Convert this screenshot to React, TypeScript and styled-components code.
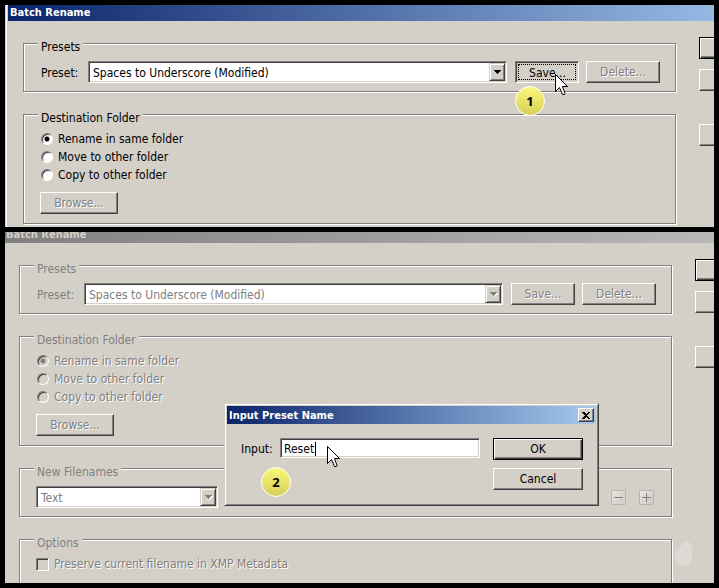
import React from "react";
import styled, { createGlobalStyle, css } from "styled-components";

const FACE = "#d4d0c8";
const SHADE = "#808080";
const DARK = "#404040";

const GlobalStyle = createGlobalStyle`
  * { box-sizing: border-box; }
  body { margin: 0; background: #000; }
  body, button, input, select {
    font-family: "DejaVu Sans Condensed", "DejaVu Sans", sans-serif;
    font-size: 12px;
    color: #000;
  }
`;

const Page = styled.main`
  display: grid;
  grid-template-rows: auto minmax(0, 1fr);
  gap: 5px;
  height: 100vh;
  padding: 5px;
  background: #000;
`;

const Shot = styled.section`
  position: relative;
  display: flex;
  overflow: hidden;
  background: ${FACE};
`;

const Window = styled.div<{ $shifted?: boolean }>`
  flex: 1;
  min-width: 0;
  display: flex;
  flex-direction: column;
  border-left: 1px solid ${FACE};
  box-shadow: inset 1px 0 #fff;
  padding-left: 2px;
  ${(p) => p.$shifted && css`margin: -5px 0 0 -4px;`}
`;

const TitleBar = styled.header<{ $inactive?: boolean }>`
  flex: none;
  height: 16px;
  padding-left: 2px;
  line-height: 15px;
  font-size: 11px;
  font-weight: bold;
  white-space: nowrap;
  color: ${(p) => (p.$inactive ? FACE : "#fff")};
  background: ${(p) =>
    p.$inactive
      ? "linear-gradient(90deg, #808080, #b8b8b8)"
      : "linear-gradient(90deg, #0a246a, #95b8e3)"};
`;

const Body = styled.div<{ $side: number }>`
  flex: 1;
  display: grid;
  grid-template-columns: minmax(0, 1fr) ${(p) => p.$side}px;
  gap: 23px;
  padding: 11px 0 3px 15px;
`;

const Groups = styled.div`
  display: flex;
  flex-direction: column;
  gap: 11px;
`;

const Group = styled.fieldset<{ $cut?: boolean }>`
  min-width: 0;
  margin: 0;
  padding: 6px 15px 8px 17px;
  border: 1px solid ${SHADE};
  box-shadow: 1px 1px #fff, inset 1px 1px #fff;
  color: #000;
  &:disabled { color: ${SHADE}; }
  ${(p) => p.$cut && css`flex: 1; margin-bottom: -20px; padding-top: 4px;`}
`;

const Legend = styled.legend`
  margin-left: -3px;
  padding: 8px 3px 0;
  line-height: 15px;
  background: ${FACE};
`;

const Row = styled.div`
  display: flex;
  align-items: center;
`;

const FieldLabel = styled.label`
  width: 47px;
  line-height: 24px;
  height: 22px;
`;

const SelectBox = styled.div<{ $narrow?: boolean }>`
  position: relative;
  height: 22px;
  ${(p) => (p.$narrow ? css`width: 182px; margin-left: -1px;` : css`flex: 1;`)}
`;

const Select = styled.select`
  appearance: none;
  display: block;
  width: 100%;
  height: 22px;
  padding: 1px 20px 0 4px;
  border: 1px solid;
  border-color: ${SHADE} #fff #fff ${SHADE};
  border-radius: 0;
  background: #fff;
  box-shadow: inset 1px 1px ${DARK}, inset -1px -1px ${FACE};
  opacity: 1;
  &:disabled { color: ${SHADE}; opacity: 1; }
`;

const ArrowBox = styled.span`
  position: absolute;
  top: 2px;
  right: 2px;
  display: grid;
  place-items: center;
  width: 16px;
  height: 18px;
  border: 1px solid;
  border-color: ${FACE} ${DARK} ${DARK} ${FACE};
  box-shadow: inset 1px 1px #fff, inset -1px -1px ${SHADE};
  background: ${FACE};
  pointer-events: none;
`;

const Button = styled.button<{ $width: number; $look?: "default" | "pressed" }>`
  flex: none;
  width: ${(p) => p.$width}px;
  height: 22px;
  padding: 0;
  border: 1px solid;
  border-color: #fff ${DARK} ${DARK} #fff;
  border-radius: 0;
  background: ${FACE};
  box-shadow: inset -1px -1px ${SHADE};
  &:disabled { color: ${SHADE}; text-shadow: 1px 1px #fff; }
  ${(p) =>
    p.$look === "default" &&
    css`
      border-color: #000;
      box-shadow: inset 1px 1px #fff, inset -1px -1px ${DARK}, inset -2px -2px ${SHADE};
    `}
  ${(p) =>
    p.$look === "pressed" &&
    css`
      padding: 1px 0 0 1px;
      border-color: ${SHADE} #fff #fff ${SHADE};
      box-shadow: inset 1px 1px ${DARK};
      outline: 1px dotted #000;
      outline-offset: -4px;
    `}
`;

const Actions = styled.div`
  display: flex;
  gap: 7px;
  margin-left: 8px;
`;

const SaveSlot = styled.div`
  position: relative;
`;

const Choices = styled.div`
  display: flex;
  flex-direction: column;
  margin: -2px 0 8px;
`;

const Choice = styled.label<{ $disabled?: boolean }>`
  display: flex;
  align-items: center;
  gap: 5px;
  height: 18px;
  line-height: 18px;
  text-shadow: ${(p) => (p.$disabled ? "1px 1px #fff" : "none")};
`;

const Radio = styled.input`
  appearance: none;
  width: 12px;
  height: 12px;
  margin: 0;
  border: 1px solid;
  border-color: ${SHADE} #fff #fff ${SHADE};
  border-radius: 50%;
  background: #fff;
  box-shadow: inset 1px 1px ${DARK};
  &:disabled { background: ${FACE}; }
  &:checked { background: radial-gradient(circle, #000 2px, #fff 3px); }
  &:checked:disabled { background: radial-gradient(circle, ${SHADE} 2px, ${FACE} 3px); }
`;

const CheckBox = styled.input`
  appearance: none;
  width: 13px;
  height: 13px;
  margin: 0 0 0 -1px;
  border: 1px solid;
  border-color: ${SHADE} #fff #fff ${SHADE};
  background: ${FACE};
  box-shadow: inset 1px 1px ${DARK};
`;

const Inset = styled.div`
  margin-left: -1px;
  padding-bottom: 1px;
`;

const Side = styled.div`
  display: flex;
  flex-direction: column;
  gap: 10px;
  padding-top: 5px;
`;

const SideGap = styled.div`
  height: 13px;
`;

const Stepper = styled.div`
  display: flex;
  gap: 13px;
  margin-left: auto;
  padding-right: 2px;
`;

const StepButton = styled.button`
  display: grid;
  place-items: center;
  width: 15px;
  height: 15px;
  padding: 0;
  border: 1px solid #b8b5af;
  border-radius: 1px;
  background: linear-gradient(135deg, #e8e6e2, #cdc9c1);
`;

const Badge = styled.span<{ $x: number; $y: number }>`
  position: absolute;
  z-index: 2;
  left: ${(p) => p.$x}px;
  top: ${(p) => p.$y}px;
  width: 30px;
  height: 30px;
  border: 1px solid #fff;
  border-radius: 50%;
  background: linear-gradient(#fbf77c, #d8d056);
  font: bold 13px/28px "Open Sans", sans-serif;
  text-align: center;
`;

const Cursor = styled.svg<{ $x: number; $y: number }>`
  position: absolute;
  z-index: 3;
  left: ${(p) => p.$x}px;
  top: ${(p) => p.$y}px;
`;

const Dialog = styled.form`
  position: absolute;
  left: 219px;
  top: 171px;
  width: 375px;
  height: 103px;
  padding: 2px;
  border: 1px solid;
  border-color: ${FACE} ${DARK} ${DARK} ${FACE};
  background: ${FACE};
  box-shadow: inset 1px 1px #fff, inset -1px -1px ${SHADE};
`;

const DialogTitle = styled.header`
  display: flex;
  align-items: center;
  justify-content: space-between;
  height: 18px;
  padding: 0 2px;
  font-size: 11px;
  font-weight: bold;
  color: #fff;
  background: linear-gradient(90deg, #0a246a, #a6caf0);
`;

const CloseButton = styled.button`
  display: grid;
  place-items: center;
  width: 16px;
  height: 14px;
  padding: 0;
  border: 1px solid;
  border-color: #fff ${DARK} ${DARK} #fff;
  background: ${FACE};
  box-shadow: inset -1px -1px ${SHADE};
`;

const DialogBody = styled.div`
  display: flex;
  align-items: flex-start;
  padding: 14px 13px 0 14px;
`;

const InputLabel = styled.label`
  width: 39px;
  line-height: 22px;
`;

const TextInput = styled.input`
  flex: 1;
  min-width: 0;
  height: 20px;
  padding: 1px 3px 0;
  border: 1px solid;
  border-color: ${SHADE} #fff #fff ${SHADE};
  background: #fff;
  box-shadow: inset 1px 1px ${DARK}, inset -1px -1px ${FACE};
`;

const Caret = styled.span`
  position: absolute;
  left: 90px;
  top: 38px;
  width: 1px;
  height: 14px;
  background: #000;
`;

const DialogButtons = styled.div`
  display: flex;
  flex-direction: column;
  gap: 8px;
  margin-left: 13px;
`;

const Smudge = styled.svg`
  position: absolute;
  right: 18px;
  bottom: 16px;
`;

function Pointer({ x, y }: { x: number; y: number }) {
  return (
    <Cursor $x={x} $y={y} width="13" height="22" viewBox="0 0 13 22" aria-hidden="true">
      <path
        d="M.5 .5V17.5L4.5 13.5L7.5 20.5H9.5L10 19.5L7.5 12.5H12.5Z"
        fill="#fff"
        stroke="#000"
        strokeLinejoin="miter"
      />
    </Cursor>
  );
}

function DropDown({ id, label, value, disabled, narrow }: {
  id: string; label?: string; value: string; disabled?: boolean; narrow?: boolean;
}) {
  return (
    <SelectBox $narrow={narrow}>
      <Select id={id} aria-label={label} disabled={disabled}>
        <option>{value}</option>
      </Select>
      <ArrowBox>
        <svg width="9" height="6" viewBox="0 0 9 6" shapeRendering="crispEdges">
          {disabled && <path d="M2 2H9L5.500 6Z" fill="#fff" />}
          <path d="M1 1H8L4.500 5Z" fill={disabled ? SHADE : "#000"} />
        </svg>
      </ArrowBox>
    </SelectBox>
  );
}

function PresetGroup({ id, disabled }: { id: string; disabled?: boolean }) {
  return (
    <Group disabled={disabled}>
      <Legend>Presets</Legend>
      <Row>
        <FieldLabel htmlFor={id}>Preset:</FieldLabel>
        <DropDown id={id} value="Spaces to Underscore (Modified)" disabled={disabled} />
        <Actions>
          <SaveSlot>
            <Button type="button" $width={64} $look={disabled ? undefined : "pressed"} disabled={disabled}>
              Save...
            </Button>
            {!disabled && <Badge $x={0} $y={25}>1</Badge>}
            {!disabled && <Pointer x={40} y={13} />}
          </SaveSlot>
          <Button type="button" $width={74} disabled>Delete...</Button>
        </Actions>
      </Row>
    </Group>
  );
}

const folders = ["Rename in same folder", "Move to other folder", "Copy to other folder"];

function DestinationGroup({ name, disabled }: { name: string; disabled?: boolean }) {
  return (
    <Group disabled={disabled}>
      <Legend>Destination Folder</Legend>
      <Choices>
        {folders.map((folder, i) => (
          <Choice key={folder} $disabled={disabled}>
            <Radio type="radio" name={name} defaultChecked={i === 0} />
            {folder}
          </Choice>
        ))}
      </Choices>
      <Inset>
        <Button type="button" $width={78} disabled>Browse...</Button>
      </Inset>
    </Group>
  );
}

function SideButtons() {
  return (
    <Side>
      <Button type="button" $width={90} $look="default" aria-label="Rename" />
      <Button type="button" $width={90} aria-label="Cancel" />
      <SideGap />
      <Button type="button" $width={90} aria-label="Preview" />
    </Side>
  );
}

export default function App() {
  return (
    <Page>
      <GlobalStyle />
      <Shot>
        <Window>
          <TitleBar>Batch Rename</TitleBar>
          <Body $side={15}>
            <Groups>
              <PresetGroup id="preset-active" />
              <DestinationGroup name="destination-active" />
            </Groups>
            <SideButtons />
          </Body>
        </Window>
      </Shot>
      <Shot>
        <Window $shifted>
          <TitleBar $inactive>Batch Rename</TitleBar>
          <Body $side={19}>
            <Groups>
              <PresetGroup id="preset-idle" disabled />
              <DestinationGroup name="destination-idle" disabled />
              <Group disabled>
                <Legend>New Filenames</Legend>
                <Row>
                  <DropDown id="filename-part" label="Filename part" value="Text" disabled narrow />
                  <Stepper>
                    <StepButton type="button" aria-label="Remove">
                      <svg width="9" height="9" viewBox="0 0 9 9"><path d="M0 4.500H9" stroke={SHADE} /></svg>
                    </StepButton>
                    <StepButton type="button" aria-label="Add">
                      <svg width="9" height="9" viewBox="0 0 9 9"><path d="M0 4.500H9M4.500 0V9" stroke={SHADE} /></svg>
                    </StepButton>
                  </Stepper>
                </Row>
              </Group>
              <Group disabled $cut>
                <Legend>Options</Legend>
                <Choice $disabled>
                  <CheckBox type="checkbox" />
                  Preserve current filename in XMP Metadata
                </Choice>
              </Group>
            </Groups>
            <SideButtons />
          </Body>
        </Window>
        <Smudge width="22" height="27" viewBox="0 0 22 27" aria-hidden="true">
          <path
            d="M7 6C8 2 11 1 13 2C16 2 17 4 17 6L20 7L18 9C20 15 18 22 13 25C8 27 2 25 1 19C0 13 4 9 7 6Z"
            fill="#dedbd4"
          />
        </Smudge>
        <Dialog onSubmit={(e: React.FormEvent) => e.preventDefault()}>
          <DialogTitle>
            Input Preset Name
            <CloseButton type="button" aria-label="Close">
              <svg width="8" height="7" viewBox="0 0 8 7" shapeRendering="crispEdges">
                <path d="M0 0H2L4 2L6 0H8L5 3.500L8 7H6L4 5L2 7H0L3 3.500Z" />
              </svg>
            </CloseButton>
          </DialogTitle>
          <DialogBody>
            <InputLabel htmlFor="preset-name">Input:</InputLabel>
            <TextInput id="preset-name" type="text" defaultValue="Reset" />
            <DialogButtons>
              <Button type="submit" $width={90} $look="default">OK</Button>
              <Button type="button" $width={90}>Cancel</Button>
            </DialogButtons>
          </DialogBody>
          <Caret />
          <Badge $x={36} $y={63}>2</Badge>
          <Pointer x={102} y={42} />
        </Dialog>
      </Shot>
    </Page>
  );
}
